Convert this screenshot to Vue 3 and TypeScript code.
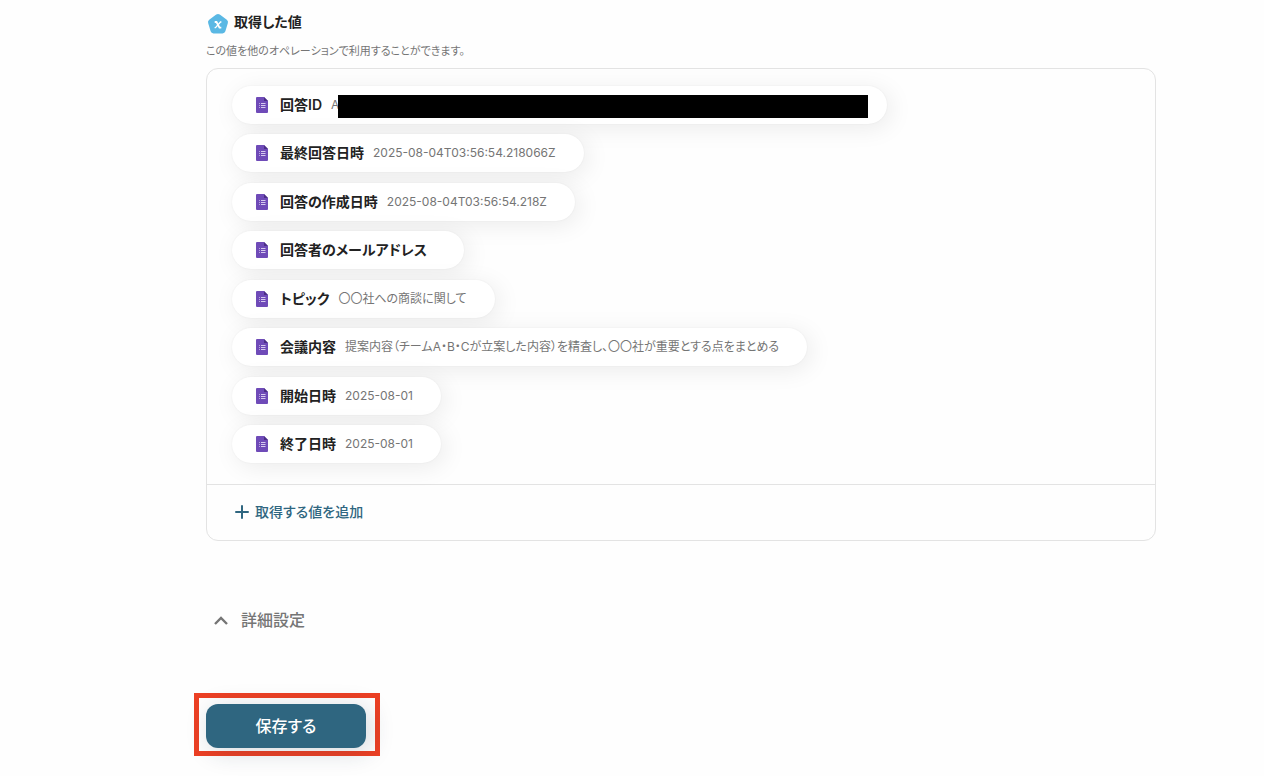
<script setup lang="ts">
import { ref } from 'vue'

interface FetchedValue {
  label: string
  value: string
  hidden?: boolean
}

const values: FetchedValue[] = [
  { label: '回答ID', value: 'A', hidden: true },
  { label: '最終回答日時', value: '2025-08-04T03:56:54.218066Z' },
  { label: '回答の作成日時', value: '2025-08-04T03:56:54.218Z' },
  { label: '回答者のメールアドレス', value: '' },
  { label: 'トピック', value: '〇〇社への商談に関して' },
  { label: '会議内容', value: '提案内容（チームA・B・Cが立案した内容）を精査し、〇〇社が重要とする点をまとめる' },
  { label: '開始日時', value: '2025-08-01' },
  { label: '終了日時', value: '2025-08-01' },
]

const expanded = ref(false)
</script>

<template>
  <main class="page">
    <header class="heading">
      <svg class="badge" viewBox="0 0 24 24" aria-hidden="true">
        <path
          d="M12 5 19 10.200 16.500 18.500H7.500L5 10.200Z"
          fill="#5ab8e4"
          stroke="#5ab8e4"
          stroke-width="6"
          stroke-linejoin="round"
        />
        <path d="M8.700 10h1.800l3 5.600h1.800" fill="none" stroke="#fff" stroke-width="1.800" />
        <path d="M15.400 10h-.9L9.500 15.600h-.9" fill="none" stroke="#fff" stroke-width="1.300" />
      </svg>
      <h2 class="title">取得した値</h2>
    </header>
    <p class="note">この値を他のオペレーションで利用することができます。</p>

    <section class="panel">
      <ul class="values">
        <li v-for="item in values" :key="item.label" class="pill">
          <svg class="doc" viewBox="0 0 12 16" aria-hidden="true">
            <path d="M1 0h7l4 4v11a1 1 0 0 1-1 1H1a1 1 0 0 1-1-1V1a1 1 0 0 1 1-1Z" fill="#6f4bb8" />
            <path d="M8 0l4 4H8Z" fill="#4b2f86" />
            <path d="M5 6.500h4.500M5 8.500h4.500M5 10.500h4.500" stroke="#d6caee" />
            <path d="M3 6.500h1M3 8.500h1M3 10.500h1" stroke="#b7a3df" />
          </svg>
          <span class="label">{{ item.label }}</span>
          <span v-if="item.value" class="value" :class="{ long: item.hidden }">{{ item.value }}</span>
          <span v-if="item.hidden" class="mask"></span>
        </li>
      </ul>
      <div class="footer">
        <button type="button" class="add">
          <svg class="plus" viewBox="0 0 14 14" aria-hidden="true">
            <path d="M7 1v12M1 7h12" stroke="#2f6680" stroke-width="2" stroke-linecap="round" />
          </svg>
          取得する値を追加
        </button>
      </div>
    </section>

    <button type="button" class="details" :aria-expanded="expanded" @click="expanded = !expanded">
      <svg class="chevron" viewBox="0 0 14 10" aria-hidden="true">
        <path d="M1 8 7 2 13 8" fill="none" stroke="#757575" stroke-width="2.400" />
      </svg>
      詳細設定
    </button>

    <div class="callout">
      <button type="button" class="save">保存する</button>
    </div>
  </main>
</template>

<style>
body {
  margin: 0;
  background: #fefefe;
}
</style>

<style scoped>
.page {
  padding: 12px 108px 20px 206px;
  font-family: Inter, "Noto Sans CJK JP", sans-serif;
  font-feature-settings: "palt";
  color: #222;
}

button {
  padding: 0;
  border: 0;
  background: none;
  font-family: inherit;
  font-feature-settings: inherit;
  cursor: pointer;
}

.heading {
  display: flex;
  gap: 4px;
  height: 22px;
}

.badge {
  width: 24px;
  height: 24px;
}

.title {
  margin: 0;
  font-size: 14px;
  line-height: 20px;
  font-weight: 600;
}

.note {
  margin: 8px 0;
  font-size: 11px;
  line-height: 18px;
  color: #757575;
}

.panel {
  border: 1px solid #e3e3e3;
  border-radius: 12px;
}

.values {
  display: flex;
  flex-direction: column;
  align-items: flex-start;
  justify-content: space-between;
  min-height: 377px;
  margin: 0;
  padding: 17px 25px 21px;
  list-style: none;
}

.pill {
  position: relative;
  display: flex;
  align-items: center;
  box-sizing: border-box;
  height: 38px;
  padding: 0 28px 0 24px;
  border-radius: 19px;
  background: #fff;
  box-shadow: 0 0 2px rgba(0, 0, 0, 0.06), 4px 4px 24px rgba(0, 0, 0, 0.08);
}

.doc {
  width: 12px;
  height: 16px;
  margin-right: 12px;
}

.label {
  margin-right: 9px;
  font-size: 14px;
  line-height: 20px;
  font-weight: 600;
}

.value {
  font-size: 12px;
  line-height: 20px;
  color: #757575;
}

.long {
  width: 528px;
}

.mask {
  position: absolute;
  inset: 9px 19px 6px 106px;
  background: #000;
}

.footer {
  padding: 15px 28px 17px;
  border-top: 1px solid #e3e3e3;
}

.add {
  display: flex;
  align-items: center;
  gap: 6px;
  font-size: 14px;
  line-height: 23px;
  font-weight: 500;
  color: #2f6680;
}

.plus {
  width: 14px;
  height: 14px;
}

.details {
  display: flex;
  align-items: center;
  gap: 13px;
  margin: 67px 0 60px;
  padding: 0 8px;
  font-size: 16px;
  line-height: 25px;
  font-weight: 500;
  color: #757575;
}

.chevron {
  width: 14px;
  height: 10px;
}

.callout {
  width: fit-content;
  margin-left: -12px;
  padding: 6px 9px 3px 7px;
  border: 5px solid #ec4024;
}

.save {
  display: block;
  width: 160px;
  height: 44px;
  padding-bottom: 2px;
  border-radius: 12px;
  background: #2f6680;
  box-shadow: 4px 4px 24px rgba(30, 50, 70, 0.18);
  font-size: 16px;
  font-weight: 500;
  color: #fff;
}
</style>
